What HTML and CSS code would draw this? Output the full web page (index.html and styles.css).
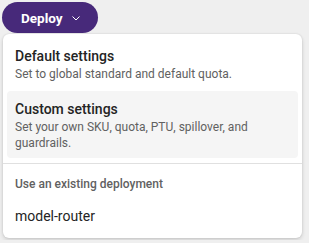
FILE: index.html
```html
<!DOCTYPE html>
<html lang="en">
<head>
  <meta charset="UTF-8"/>
  <title>Deploy menu</title>
  <link rel="stylesheet" href="styles.css">
</head>
<body>

  <!-- Deploy button -->
  <button class="deploy-btn">
    Deploy
    <svg class="chevron" width="8" height="5" viewBox="0 0 8 5">
      <path d="M0.5 0.5 L4 4 L7.5 0.5" fill="none" stroke="#fff" stroke-width="1"/>
    </svg>
  </button>

  <!-- Dropdown menu -->
  <div class="menu">
    <div class="option">
      <div class="option-title">Default settings</div>
      <div class="option-desc">Set to global standard and default quota.</div>
    </div>
    <div class="option hover">
      <div class="option-title">Custom settings</div>
      <div class="option-desc">Set your own SKU, quota, PTU, spillover, and guardrails.</div>
    </div>

    <div class="divider"></div>

    <div class="group-header">Use an existing deployment</div>
    <div class="menu-item">model-router</div>
  </div>

</body>
</html>
```

FILE: styles.css
```css
body {
  margin: 0;
  padding: 2px;
  background: #efefef;
  font-family: Roboto, sans-serif;
  color: #242424;
}
.deploy-btn {
  display: flex;
  align-items: center;
  gap: 9px;
  height: 31px;
  width: 96px;
  padding: 0 0 0 19px;
  border: none;
  border-radius: 16px;
  background: #47297a;
  color: #fff;
  font-family: inherit;
  font-size: 13.5px;
  font-weight: 700;
}
.chevron {
  margin-top: 1px;
}
/* Menu */
.menu {
  margin: 1px 0 0 1px;
  width: 291px;
  padding: 4px;
  background: #fff;
  border-radius: 6px;
  box-shadow: 0 2px 4px rgba(0,0,0,0.14), 0 0 2px rgba(0,0,0,0.12);
}
.option {
  padding: 8px 8px 7px;
  border-radius: 4px;
  margin-bottom: 2px;
}
.option.hover {
  background: #f5f5f5;
}
.option-title {
  font-size: 14px;
  font-weight: 500;
  line-height: 20px;
}
.option-desc {
  font-size: 12px;
  line-height: 16px;
  color: #616161;
}
.divider {
  height: 1px;
  background: #e0e0e0;
  margin: 5px -4px 4px;
}
.group-header {
  padding: 8px 8px;
  font-size: 12px;
  font-weight: 500;
  line-height: 16px;
  color: #616161;
}
.menu-item {
  padding: 6px 8px 8px;
  font-size: 14px;
  line-height: 20px;
}
```
